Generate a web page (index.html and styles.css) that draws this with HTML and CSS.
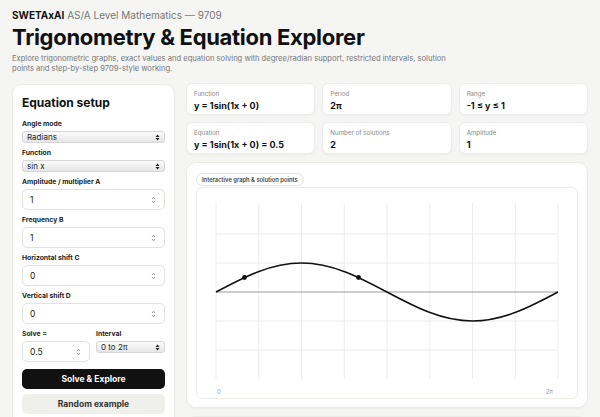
FILE: index.html
```html
<!DOCTYPE html>
<html lang="en">
<head>
    <meta charset="UTF-8">
    <meta name="viewport" content="width=device-width, initial-scale=1.0">
    <title>Trigonometry &amp; Equation Explorer</title>
    <link rel="stylesheet" href="styles.css">
</head>
<body>
    <header class="top">
        <div class="brand"><b>SWETAxAI</b> <span>AS/A Level Mathematics — 9709</span></div>
        <h1>Trigonometry &amp; Equation Explorer</h1>
        <p class="intro">Explore trigonometric graphs, exact values and equation solving with degree/radian support, restricted intervals, solution points and step-by-step 9709-style working.</p>
    </header>

    <main class="layout">
        <section class="panel setup">
            <h2>Equation setup</h2>

            <div class="field">
                <label>Angle mode</label>
                <div class="select">
                    <select><option>Radians</option><option>Degrees</option></select>
                    <svg width="5" height="7" viewBox="0 0 5 7"><path d="M2.5 0.5 L4.5 3 H0.5 Z M2.5 6.5 L4.5 4 H0.5 Z" fill="#222"/></svg>
                </div>
            </div>

            <div class="field">
                <label>Function</label>
                <div class="select">
                    <select><option>sin x</option><option>cos x</option><option>tan x</option></select>
                    <svg width="5" height="7" viewBox="0 0 5 7"><path d="M2.5 0.5 L4.5 3 H0.5 Z M2.5 6.5 L4.5 4 H0.5 Z" fill="#222"/></svg>
                </div>
            </div>

            <div class="field">
                <label>Amplitude / multiplier A</label>
                <div class="num"><input type="text" value="1"><svg width="5" height="8" viewBox="0 0 5 8"><path d="M1 3 L2.5 1.2 L4 3 M1 5 L2.5 6.8 L4 5" fill="none" stroke="#888" stroke-width="0.8"/></svg></div>
            </div>

            <div class="field">
                <label>Frequency B</label>
                <div class="num"><input type="text" value="1"><svg width="5" height="8" viewBox="0 0 5 8"><path d="M1 3 L2.5 1.2 L4 3 M1 5 L2.5 6.8 L4 5" fill="none" stroke="#888" stroke-width="0.8"/></svg></div>
            </div>

            <div class="field">
                <label>Horizontal shift C</label>
                <div class="num"><input type="text" value="0"><svg width="5" height="8" viewBox="0 0 5 8"><path d="M1 3 L2.5 1.2 L4 3 M1 5 L2.5 6.8 L4 5" fill="none" stroke="#888" stroke-width="0.8"/></svg></div>
            </div>

            <div class="field">
                <label>Vertical shift D</label>
                <div class="num"><input type="text" value="0"><svg width="5" height="8" viewBox="0 0 5 8"><path d="M1 3 L2.5 1.2 L4 3 M1 5 L2.5 6.8 L4 5" fill="none" stroke="#888" stroke-width="0.8"/></svg></div>
            </div>

            <div class="pair">
                <div class="field">
                    <label>Solve =</label>
                    <div class="num"><input type="text" value="0.5"><svg width="5" height="8" viewBox="0 0 5 8"><path d="M1 3 L2.5 1.2 L4 3 M1 5 L2.5 6.8 L4 5" fill="none" stroke="#888" stroke-width="0.8"/></svg></div>
                </div>
                <div class="field">
                    <label>Interval</label>
                    <div class="select">
                        <select><option>0 to 2π</option><option>−π to π</option></select>
                        <svg width="5" height="7" viewBox="0 0 5 7"><path d="M2.5 0.5 L4.5 3 H0.5 Z M2.5 6.5 L4.5 4 H0.5 Z" fill="#222"/></svg>
                    </div>
                </div>
            </div>

            <button class="btn primary">Solve &amp; Explore</button>
            <button class="btn soft">Random example</button>
        </section>

        <div class="results">
            <div class="stats">
                <div class="card"><span>Function</span><strong>y = 1sin(1x + 0)</strong></div>
                <div class="card"><span>Period</span><strong>2π</strong></div>
                <div class="card"><span>Range</span><strong>-1 ≤ y ≤ 1</strong></div>
                <div class="card"><span>Equation</span><strong>y = 1sin(1x + 0) = 0.5</strong></div>
                <div class="card"><span>Number of solutions</span><strong>2</strong></div>
                <div class="card"><span>Amplitude</span><strong>1</strong></div>
            </div>

            <section class="panel graph">
                <div class="chip">Interactive graph &amp; solution points</div>
                <div class="plot">
                    <svg viewBox="1 1 380 210" width="380" height="210">
                        <g stroke="#ececec" stroke-width="1">
                            <path d="M20 16 V192 M62.75 16 V192 M105.5 16 V192 M148.25 16 V192 M191 16 V192 M233.75 16 V192 M276.5 16 V192 M319.25 16 V192 M362 16 V192"/>
                            <path d="M20 47 H362 M20 76 H362 M20 134 H362 M20 163 H362"/>
                        </g>
                        <path d="M20 105 H362" stroke="#9a9a9a" stroke-width="1"/>
                        <path d="M20 105 C47.88 90.14 74.56 76 105.5 76 S163.12 90.14 191 105 S245.56 134 276.5 134 S334.12 119.86 362 105" fill="none" stroke="#111" stroke-width="1.6"/>
                        <circle cx="48.5" cy="90.5" r="2.4" fill="#111"/>
                        <circle cx="162.5" cy="90.5" r="2.4" fill="#111"/>
                        <text x="21" y="207" class="tick">0</text>
                        <text x="357" y="207" class="tick" text-anchor="end">2π</text>
                    </svg>
                </div>
            </section>

            <section class="panel steps"></section>
        </div>
    </main>
</body>
</html>
```

FILE: styles.css
```css
* {
    box-sizing: border-box;
}

body {
    margin: 0;
    padding: 0 12px;
    background: #f5f5f3;
    color: #111;
    font-family: Inter, "Noto Sans", Arial, sans-serif;
}

.top {
    padding-top: 9px;
}

.brand {
    font-size: 10px;
    line-height: 13px;
    color: #111;
}

.brand span {
    color: #777;
}

h1 {
    margin: 2px 0 4px;
    font-size: 22px;
    line-height: 26px;
    font-weight: 700;
    letter-spacing: -0.3px;
}

.intro {
    margin: 0;
    max-width: 450px;
    font-size: 7.6px;
    line-height: 10px;
    color: #777;
}

.layout {
    display: grid;
    grid-template-columns: 163px 1fr;
    gap: 11px;
    margin-top: 9px;
    align-items: start;
}

.panel {
    background: #fff;
    border: 1px solid #ebebe8;
    border-radius: 10px;
    box-shadow: 0 1px 2px rgba(0, 0, 0, 0.04);
}

/* left column: inputs */
.setup {
    margin-top: 1px;
    padding: 9px 9px 40px;
    display: flex;
    flex-direction: column;
    gap: 5px;
}

.setup h2 {
    margin: 0 0 2px;
    font-size: 12px;
    line-height: 18px;
    font-weight: 700;
}

.field label {
    display: block;
    margin-bottom: 2px;
    font-size: 6.8px;
    line-height: 10px;
    font-weight: 700;
    color: #222;
}

.select {
    display: flex;
    align-items: center;
    height: 12px;
    padding: 0 4px;
    border-radius: 3px;
    background: linear-gradient(#fbfbfb, #e6e6e6);
    border: 1px solid #d6d6d6;
}

.select select {
    flex: 1;
    min-width: 0;
    appearance: none;
    -webkit-appearance: none;
    border: none;
    background: transparent;
    padding: 0;
    font-family: inherit;
    font-size: 8px;
    color: #222;
    outline: none;
}

.num {
    display: flex;
    align-items: center;
    height: 21px;
    padding: 0 8px 0 7px;
    border: 1px solid #e2e2df;
    border-radius: 5px;
    background: #fff;
}

.num input {
    flex: 1;
    min-width: 0;
    border: none;
    padding: 0;
    font-family: inherit;
    font-size: 8.5px;
    color: #222;
    outline: none;
}

.pair {
    display: grid;
    grid-template-columns: 68px 1fr;
    gap: 6px;
}

.btn {
    height: 20px;
    border: none;
    border-radius: 5px;
    font-family: inherit;
    font-size: 8.5px;
    font-weight: 700;
    cursor: pointer;
}

.primary {
    margin-top: 2px;
    background: #111;
    color: #fff;
}

.soft {
    background: #efefec;
    color: #333;
}

/* right column: summary cards + graph */
.results {
    display: flex;
    flex-direction: column;
    gap: 8px;
}

.stats {
    display: grid;
    grid-template-columns: repeat(3, 1fr);
    gap: 7px;
}

.card {
    padding: 6px 7px 3px;
    background: #fff;
    border: 1px solid #ececea;
    border-radius: 6px;
    box-shadow: 0 1px 2px rgba(0, 0, 0, 0.03);
}

.card span {
    display: block;
    margin-bottom: 2px;
    font-size: 6.2px;
    line-height: 8px;
    color: #888;
}

.card strong {
    display: block;
    font-size: 9px;
    line-height: 11px;
    font-weight: 700;
}

.graph {
    padding: 10px 9px 8px;
}

.chip {
    width: fit-content;
    padding: 0 5px;
    height: 13px;
    line-height: 11px;
    border: 1px solid #e2e2df;
    border-radius: 7px;
    font-size: 5.8px;
    font-weight: 600;
    color: #444;
}

.plot {
    margin-top: 1px;
    border: 1px solid #ebebe8;
    border-radius: 6px;
    background: #fff;
}

.plot svg {
    display: block;
}

.tick {
    font-family: Inter, Arial, sans-serif;
    font-size: 6px;
    fill: #999;
}

.steps {
    min-height: 60px;
}
```
